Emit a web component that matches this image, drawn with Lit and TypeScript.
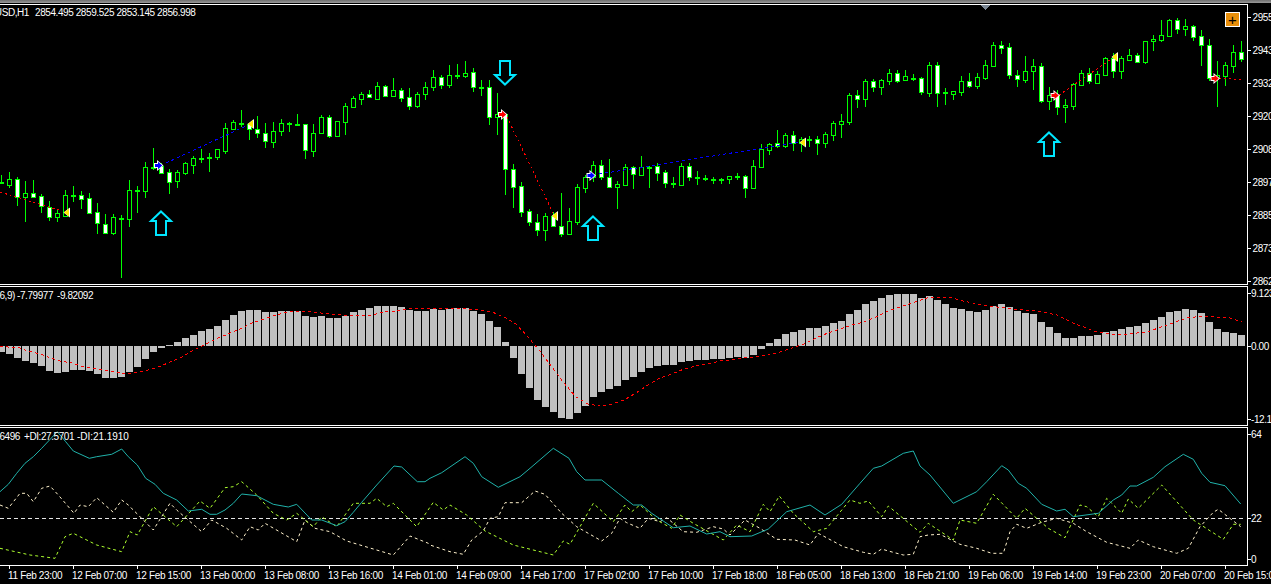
import { LitElement, html, css, svg } from 'lit';
import { customElement } from 'lit/decorators.js';

// wick top, wick bottom, body top, body bottom, kind: 0 hollow, 1 white, 2 doji
type Candle = [number, number, number, number, number];

const CANDLES: Candle[] = [
  [175,184,182,182,2],[172,188,179,185,0],[177,206,179,197,1],[181,222,193,197,0],[180,198,193,197,1],[194,213,196,206,1],
  [201,221,207,217,1],[209,222,213,217,0],[190,217,195,216,0],[186,202,195,195,2],[191,209,195,199,1],[193,214,198,213,1],
  [203,234,212,223,1],[214,234,224,233,1],[214,235,217,233,0],[215,278,218,218,2],[180,227,190,219,0],[186,213,190,190,2],
  [162,198,167,191,0],[148,170,167,167,2],[163,174,166,173,1],[169,194,172,182,1],[170,188,172,181,0],[162,175,163,173,0],
  [156,174,158,165,0],[149,163,158,158,2],[153,172,157,157,2],[149,160,149,157,0],[123,154,128,151,0],[120,129,122,129,0],
  [110,127,123,123,2],[123,140,124,129,1],[116,138,129,133,1],[123,148,133,141,1],[122,148,131,142,0],[119,136,123,131,0],
  [122,132,123,123,2],[114,126,124,124,2],[124,159,124,150,1],[124,157,133,151,0],[115,134,117,133,0],[115,138,117,136,1],
  [121,137,121,136,0],[103,135,106,122,0],[96,108,98,107,0],[92,105,94,99,0],[90,98,94,97,1],[82,99,86,99,0],
  [85,97,86,96,1],[78,96,90,96,0],[88,102,90,98,1],[88,110,97,106,1],[92,108,94,106,0],[82,100,87,94,0],
  [70,91,77,87,0],[75,89,77,85,1],[65,88,75,85,0],[64,79,75,75,2],[61,78,73,76,0],[68,92,72,87,1],
  [80,96,87,87,2],[80,125,87,117,1],[93,135,114,117,0],[114,195,114,169,1],[164,208,169,187,1],[182,217,186,212,1],
  [209,226,211,222,1],[214,236,222,230,1],[213,241,216,230,0],[212,227,216,226,1],[193,237,226,234,1],[208,234,221,234,0],
  [184,225,187,222,0],[175,193,177,188,0],[161,182,165,177,0],[160,180,165,177,1],[159,187,177,187,1],[181,209,184,187,0],
  [164,185,167,185,0],[166,189,167,174,1],[156,175,167,175,0],[166,188,167,167,2],[163,181,166,173,1],[170,188,172,183,1],
  [177,188,183,183,2],[163,186,166,185,0],[163,181,166,177,1],[171,185,177,177,2],[175,181,178,178,2],[177,184,179,179,2],
  [178,184,179,179,2],[176,184,176,179,0],[173,180,176,176,2],[175,198,176,188,1],[160,189,166,188,0],[144,168,149,167,0],
  [143,155,144,150,0],[130,148,143,146,1],[133,148,135,146,0],[131,151,135,143,1],[137,152,139,143,0],[136,147,139,139,2],
  [136,155,139,143,1],[132,148,134,143,0],[121,141,123,135,0],[114,138,121,124,0],[93,125,95,122,0],[90,108,95,99,1],
  [79,107,81,99,0],[79,92,81,87,1],[79,95,80,87,0],[69,85,73,81,0],[70,83,73,81,1],[70,81,76,80,0],
  [74,81,78,78,2],[77,95,78,92,1],[62,97,65,93,0],[62,107,65,93,1],[88,105,92,92,2],[91,100,91,94,0],
  [76,96,81,92,0],[73,88,81,86,1],[73,89,77,86,0],[60,80,65,78,0],[42,67,45,66,0],[41,54,45,48,1],
  [43,79,47,75,1],[70,87,75,79,1],[56,83,71,80,0],[59,90,66,71,0],[63,103,66,101,1],[87,110,95,101,0],
  [90,115,95,107,1],[99,123,105,107,0],[83,110,84,106,0],[70,86,73,85,0],[68,84,73,81,1],[71,83,74,83,0],
  [57,75,58,75,0],[53,78,58,71,1],[56,79,58,71,0],[49,60,55,60,0],[53,63,55,62,1],[41,64,41,62,0],
  [35,51,39,41,0],[20,42,35,40,0],[19,36,20,36,0],[18,34,20,29,1],[19,36,26,29,0],[25,41,26,37,1],
  [30,66,36,45,1],[39,81,45,78,1],[61,107,75,78,0],[62,86,65,76,0],[45,73,52,66,0],[41,62,52,59,1],
];

const MACD = [
  -6,-8,-12,-15,-17,-20,-25,-27,-26,-24,-24,-25,-28,-32,-32,-31,-26,-21,-13,-6,-2,1,4,8,11,15,17,20,26,31,35,36,36,34,34,35,35,35,30,29,
  30,28,28,30,34,36,38,40,40,40,39,36,35,35,37,36,37,38,38,35,32,25,19,4,-12,-28,-42,-54,-61,-66,-72,-73,-67,-60,-51,-46,-43,-40,-34,-31,
  -26,-22,-20,-19,-19,-16,-15,-14,-14,-13,-13,-12,-11,-12,-9,-3,3,7,12,14,16,18,18,20,23,25,32,36,42,45,48,51,52,52,52,48,50,46,42,38,
  37,35,34,36,40,42,39,35,33,32,24,19,13,8,8,10,10,11,14,15,17,19,20,23,26,29,34,35,37,36,33,24,17,14,13,11,
];

const SIGNAL = '0,346 8,347 20,348 28,351 40,354 48,357 60,361 72,363 84,367 96,369 108,371 120,373 132,373 144,371 156,368 168,363 180,358 192,351 204,345 216,339 228,334 240,329 252,323 264,319 276,315 288,312 300,311 312,312 330,314 342,315 360,315 372,315 384,312 396,311 408,309 420,308 444,308 468,309 480,310 492,312 504,317 516,324 528,337 540,351 552,367 564,383 576,397 588,404 600,406 612,404 624,400 636,393 648,385 660,378 672,374 684,369 696,366 708,364 720,361 732,360 744,358 756,357 768,355 780,352 792,348 804,344 816,338 828,333 840,329 852,325 864,322 876,317 888,311 900,307 912,303 924,299 930,297 953,298 963,301 983,305 997,307 1013,309 1037,311 1057,315 1073,323 1097,332 1110,334 1127,334 1147,332 1167,325 1187,318 1203,316 1230,318 1242,322';

// ADX lines, traced in three stretches of the pane: [x origin, flat list of x*3, y*3 from y=425]
const ADX_MAIN: [number, number[]][] = [
  [0, [0,200,25,178,50,145,75,115,100,95,125,70,172,20,197,50,220,78,268,100,290,95,335,88,365,72,385,95,412,120,437,160,465,178,490,205,530,225,565,258,605,253,630,268,650,268,675,255,700,235,725,207,770,212,820,238,865,246,890,238,935,285,965,285,1010,302,1035,290,1060,262,1085,232,1130,180,1182,123,1205,126,1252,170,1275,170]],
  [430, [0,160,35,143,105,95,130,115,155,155,205,187,270,155,300,130,370,70,417,100,440,140,465,165,515,165,565,205,610,240,635,240,665,265,730,308,780,303,830,327,870,320,900,335,965,333,1015,312,1070,260,1140,240,1185,270,1235,238]],
  [860, [0,175,40,130,65,123,130,85,160,78,180,123,210,150,280,235,350,200,380,170,425,122,445,135,475,175,500,190,545,238,590,258,615,253,640,275,715,265,760,225,785,210,810,183,830,183,880,157,915,125,970,88,1000,103,1025,145,1050,172,1095,182,1142,237]],
];
const ADX_MINUS: [number, number[]][] = [
  [0, [0,240,25,250,60,205,80,205,100,230,125,190,150,183,175,210,222,265,240,240,265,245,290,218,340,262,365,225,385,240,435,290,460,315,510,235,530,255,605,320,635,285,680,310,725,345,750,305,775,315,795,295,890,350,915,285,945,310,990,320,1040,348,1180,390,1230,333,1285,355]],
  [430, [0,360,60,380,100,388,125,345,160,318,180,280,205,275,225,233,275,233,315,198,345,208,395,265,440,305,515,348,545,325,570,280,590,293,630,310,655,280,690,290,710,278,760,320,800,322,850,305,880,312,900,330,945,285,990,310,1040,343,1095,345,1140,360,1165,325,1240,365]],
  [860, [10,382,40,388,65,372,85,378,130,390,160,388,180,335,205,330,240,328,300,358,350,370,395,385,430,385,450,320,470,298,500,310,545,292,590,280,640,295,680,320,740,352,810,370,835,345,880,365,950,385,985,370,1020,305,1060,262,1075,253,1142,305]],
];
const ADX_PLUS: [number, number[]][] = [
  [0, [0,370,90,390,165,400,195,335,220,325,290,360,365,380,390,320,412,330,460,245,530,305,600,228,630,250,675,188,700,185,725,170,770,210,820,265,860,285,890,265,940,305,965,275,1010,305,1060,235,1110,235,1130,220,1160,245,1180,235,1250,305]],
  [430, [10,232,40,255,60,240,110,270,165,318,250,360,370,390,400,348,420,358,490,235,550,290,585,240,605,260,630,240,680,285,725,310,750,270,790,295,880,345,920,300,960,320,1000,238,1020,260,1048,213,1090,265,1150,320,1190,310,1260,225]],
  [860, [0,235,25,228,65,275,85,243,180,322,205,295,280,345,300,285,350,295,400,208,470,280,495,250,565,310,615,338,660,240,680,245,715,275,740,220,785,265,805,222,835,250,905,180,1000,285,1090,343,1120,298,1142,298]],
];

const TIME_LABELS = [
  '11 Feb 23:00','12 Feb 07:00','12 Feb 15:00','13 Feb 00:00','13 Feb 08:00','13 Feb 16:00','14 Feb 01:00','14 Feb 09:00','14 Feb 17:00','17 Feb 02:00',
  '17 Feb 10:00','17 Feb 18:00','18 Feb 05:00','18 Feb 13:00','18 Feb 21:00','19 Feb 06:00','19 Feb 14:00','19 Feb 23:00','20 Feb 07:00','20 Feb 15:00',
];

const tracePoints = (parts: [number, number[]][]) =>
  parts
    .map(([ox, zs]) => {
      const pts: string[] = [];
      for (let i = 0; i < zs.length; i += 2) {
        pts.push(`${(ox + zs[i] / 3).toFixed(1)},${(425 + zs[i + 1] / 3).toFixed(1)}`);
      }
      return pts.join(' ');
    })
    .join(' ');

const candleX = (i: number) => 1 + 8 * i;

@customElement('app-root')
export class AppRoot extends LitElement {
  static styles = css`
    :host {
      display: block;
      width: 1271px;
      height: 584px;
      overflow: hidden;
      background: #000;
      color: #fff;
      font-family: 'Liberation Sans', Arial, sans-serif;
      font-size: 10px;
    }

    .strip {
      height: 3px;
      background: linear-gradient(#6e6e6e, #9a9a9a);
      margin-bottom: 1px;
    }

    .pane {
      display: flex;
      position: relative;
    }

    .plot {
      width: 1247px;
      flex: none;
      border-top: 1px solid #fff;
      border-bottom: 1px solid #fff;
      border-right: 1px solid #fff;
    }

    .plot svg,
    .axis svg {
      display: block;
    }

    .axis {
      flex: 1;
      min-width: 0;
      overflow: hidden;
    }

    .main .plot svg { height: 279px; }
    .macd .plot svg { height: 138px; }
    .adx .plot svg { height: 137px; }

    .macd,
    .adx {
      margin-top: 1px;
    }

    text {
      fill: #fff;
      font-family: 'Liberation Sans', Arial, sans-serif;
      font-size: 10px;
      letter-spacing: -0.42px;
    }

    .wide {
      letter-spacing: -0.05px;
    }

    .crisp {
      shape-rendering: crispEdges;
    }

    .signal {
      fill: none;
      stroke: #f00;
      stroke-width: 1;
      stroke-dasharray: 3 3;
    }

    .zig-red {
      fill: none;
      stroke: #f00;
      stroke-dasharray: 2 3;
    }

    .zig-blue {
      fill: none;
      stroke: #00f;
      stroke-dasharray: 3 3;
    }

    .adx-main {
      fill: none;
      stroke: #20b2aa;
    }

    .adx-plus {
      fill: none;
      stroke: #adff2f;
      stroke-dasharray: 3 3;
    }

    .adx-minus {
      fill: none;
      stroke: #fff2cc;
      stroke-dasharray: 3 3;
    }

    .adx-level {
      stroke: #e4e4e4;
      stroke-dasharray: 4 3;
    }

    .cyan {
      fill: none;
      stroke: #00e6ff;
      stroke-width: 2;
    }

    .expand {
      position: absolute;
      left: 1225px;
      top: 8px;
      width: 15px;
      height: 15px;
      box-sizing: border-box;
      border: 1px solid #fff;
      background: #e98f0a;
      color: #000;
      font-size: 15px;
      line-height: 13px;
      text-align: center;
    }

    .times {
      display: flex;
      padding-left: 9px;
      width: 1262px;
      overflow: hidden;
    }

    .time {
      flex: none;
      width: 64px;
    }

    .time i {
      display: block;
      width: 1px;
      height: 3px;
      background: #fff;
    }

    .time span {
      display: block;
      margin: 1px 0 0 -1px;
      white-space: nowrap;
      line-height: 11px;
      letter-spacing: -0.33px;
    }
  `;

  private renderCandles() {
    return CANDLES.map(([wt, wb, bt, bb, kind], i) => {
      const x = candleX(i);
      const wick = svg`<rect x=${x} y=${wt} width="1" height=${wb - wt} fill="#0f0"></rect>`;
      if (kind === 2) {
        return svg`${wick}<rect x=${x - 2} y=${bt} width="5" height="2" fill="#0f0"></rect>`;
      }
      const inner = kind === 1 ? '#fff' : '#000';
      return svg`${wick}
        <rect x=${x - 2} y=${bt} width="5" height=${bb - bt + 1} fill="#0f0"></rect>
        <rect x=${x - 1} y=${bt + 1} width="3" height=${bb - bt - 1} fill=${inner}></rect>`;
    });
  }

  private buyArrow(cx: number, top: number) {
    const p = `${cx},${top + 1.5} ${cx + 10},${top + 11} ${cx + 5},${top + 11} ${cx + 5},${top + 25} ${cx - 5},${top + 25} ${cx - 5},${top + 11} ${cx - 10},${top + 11}`;
    return svg`<polygon class="cyan" points=${p}></polygon>`;
  }

  private sellArrow(cx: number, tip: number) {
    const p = `${cx},${tip - 1.5} ${cx + 10},${tip - 11} ${cx + 5},${tip - 11} ${cx + 5},${tip - 25} ${cx - 5},${tip - 25} ${cx - 5},${tip - 11} ${cx - 10},${tip - 11}`;
    return svg`<polygon class="cyan" points=${p}></polygon>`;
  }

  private entryMark(cx: number, cy: number, color: string) {
    const outer = `${cx - 4.5},${cy - 2.5} ${cx - 1.5},${cy - 2.5} ${cx - 1.5},${cy - 5.5} ${cx + 5},${cy} ${cx - 1.5},${cy + 5.5} ${cx - 1.5},${cy + 2.5} ${cx - 4.5},${cy + 2.5}`;
    const inner = `${cx - 3.5},${cy - 1.5} ${cx - 0.5},${cy - 1.5} ${cx - 0.5},${cy - 3.8} ${cx + 3.7},${cy} ${cx - 0.5},${cy + 3.8} ${cx - 0.5},${cy + 1.5} ${cx - 3.5},${cy + 1.5}`;
    return svg`<polygon points=${outer} fill="#fff"></polygon><polygon points=${inner} fill=${color}></polygon>`;
  }

  private exitMark(right: number, cy: number) {
    return svg`
      <polygon points="${right - 6.5},${cy} ${right},${cy - 5} ${right},${cy + 5}" fill="#fff"></polygon>
      <polygon points="${right - 6},${cy} ${right - 1},${cy - 4} ${right - 1},${cy + 4}" fill="#ffe600"></polygon>`;
  }

  private priceAxis(y0: number, h: number, textX: number, labels: [number, string][]) {
    return html`<div class="axis">
      <svg viewBox="1248 ${y0} 23 ${h}" width="23" height=${h}>
        ${labels.map(
          ([y, t]) => svg`
            <rect x="1248" y=${y} width="3" height="1" fill="#fff"></rect>
            <text x=${textX} y=${y + 4}>${t}</text>`,
        )}
      </svg>
    </div>`;
  }

  render() {
    return html`
      <div class="strip"></div>

      <div class="pane main">
        <div class="plot">
          <svg viewBox="0 5 1246 279" width="1246">
            <g class="crisp">
              ${this.renderCandles()}
              <polyline class="zig-red" points="0,192 62,211"></polyline>
              <polyline class="zig-blue" points="166,163 248,125"></polyline>
              <polyline class="zig-red" points="507,117 553,213"></polyline>
              <polyline class="zig-blue" points="599,174 801,142"></polyline>
              <polyline class="zig-red" points="1059,95 1113,58"></polyline>
              <polyline class="zig-red" points="1219,78 1244,80"></polyline>
              <polygon points="981,5 990,5 985.5,10" fill="#7b8794"></polygon>
            </g>
            ${this.buyArrow(161, 210)} ${this.buyArrow(593, 215)} ${this.buyArrow(1049, 131)}
            ${this.sellArrow(505, 86)}
            ${this.exitMark(70, 212.5)} ${this.exitMark(254, 124)} ${this.exitMark(558, 216)}
            ${this.exitMark(806, 142.5)} ${this.exitMark(1118, 57)}
            ${this.entryMark(158.5, 165.5, '#00f')} ${this.entryMark(591, 175.5, '#00f')}
            ${this.entryMark(502.5, 114.5, '#f00')} ${this.entryMark(1055, 95.5, '#f00')}
            ${this.entryMark(1215, 78.5, '#f00')}
            <text x="29" y="16" text-anchor="end">XAUUSD,H1</text>
            <text x="35" y="16">2854.495 2859.525 2853.145 2856.998</text>
          </svg>
        </div>
        ${this.priceAxis(4, 281, 1252.5, [
          [17, '2955.90'], [50, '2943.90'], [83, '2932.20'], [116, '2920.50'], [149, '2908.80'],
          [182, '2897.10'], [215, '2885.40'], [248, '2873.70'], [281, '2862.00'],
        ])}
        <div class="expand">+</div>
      </div>

      <div class="pane macd">
        <div class="plot">
          <svg viewBox="0 287 1246 138" width="1246">
            <g class="crisp">
              ${MACD.map((v, i) => {
                const x = candleX(i) - 3;
                return v >= 0
                  ? svg`<rect x=${x} y=${346 - v} width="7" height=${v} fill="#c0c0c0"></rect>`
                  : svg`<rect x=${x} y="346" width="7" height=${-v} fill="#c0c0c0"></rect>`;
              })}
              <polyline class="signal" points=${SIGNAL}></polyline>
            </g>
            <text x="15" y="299" text-anchor="end">MACD(12,26,9)</text>
            <text x="17" y="299">-7.79977</text>
            <text x="57" y="299">-9.82092</text>
          </svg>
        </div>
        ${this.priceAxis(286, 140, 1251, [[293, '9.1235'], [346, '0.00'], [419, '-12.16']])}
      </div>

      <div class="pane adx">
        <div class="plot">
          <svg viewBox="0 428 1246 137" width="1246">
            <line class="crisp adx-level" x1="0" y1="518.5" x2="1246" y2="518.5"></line>
            <polyline class="adx-minus" points=${tracePoints(ADX_MINUS)}></polyline>
            <polyline class="adx-plus" points=${tracePoints(ADX_PLUS)}></polyline>
            <polyline class="adx-main" points=${tracePoints(ADX_MAIN)}></polyline>
            <text x="20" y="440" text-anchor="end">ADX(14) 18.6496</text>
            <text x="24" y="440">+DI:27.5701</text>
            <text class="wide" x="77" y="440">-DI:21.1910</text>
          </svg>
        </div>
        ${this.priceAxis(427, 139, 1251, [[434, '64'], [518, '22'], [559, '0']])}
      </div>

      <div class="times">
        ${TIME_LABELS.map(t => html`<div class="time"><i></i><span>${t}</span></div>`)}
      </div>
    `;
  }
}
